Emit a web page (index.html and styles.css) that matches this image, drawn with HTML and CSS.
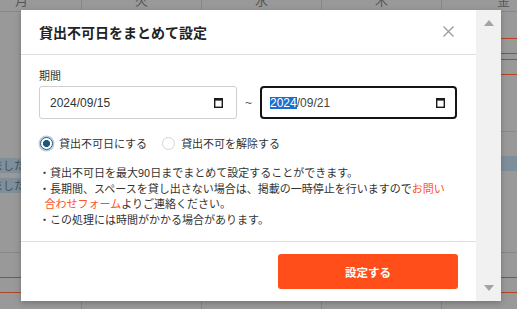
FILE: index.html
```html
<!DOCTYPE html>
<html lang="ja">
<head>
<meta charset="utf-8">
<link rel="stylesheet" href="styles.css">
</head>
<body>
<div class="calendar">
  <div class="cal-head">
    <div>月</div><div>火</div><div>水</div><div>木</div><div>金</div>
  </div>
  <div class="week week1">
    <div class="day"><div class="evt evt-a">しました</div><div class="evt evt-b">しました</div></div>
    <div class="day"></div>
    <div class="day"></div>
    <div class="day"></div>
    <div class="day"><div class="block block-a"></div><div class="block block-b"></div><div class="rule"></div><div class="evt evt-c"></div></div>
  </div>
  <div class="week week2">
    <div class="day"><div class="block block-c"></div></div>
    <div class="day"></div>
    <div class="day"></div>
    <div class="day"></div>
    <div class="day"><div class="block block-c"></div></div>
  </div>
</div>

<div class="modal">
  <div class="modal-main">
    <div class="modal-header">
      <h2 class="modal-title">貸出不可日をまとめて設定</h2>
      <span class="close"><svg width="11" height="11" viewBox="0 0 11 11"><path d="M0.5 0.5L10.5 10.5M10.5 0.5L0.5 10.5" stroke="#9d9d9d" stroke-width="1.4" fill="none"/></svg></span>
    </div>
    <div class="modal-body">
      <div class="field-label">期間</div>
      <div class="range">
        <div class="date-input">
          <span class="date-text">2024/09/15</span>
          <svg class="cal-icon" width="9" height="10" viewBox="0 0 9 10"><rect x="0.7" y="0.7" width="7.6" height="8.6" fill="none" stroke="#1a1a1a" stroke-width="1.4"/><rect x="0" y="0" width="9" height="2.6" fill="#1a1a1a"/></svg>
        </div>
        <span class="tilde">~</span>
        <div class="date-input focused">
          <span class="date-text"><span class="sel">2024</span>/09/21</span>
          <svg class="cal-icon" width="9" height="10" viewBox="0 0 9 10"><rect x="0.7" y="0.7" width="7.6" height="8.6" fill="none" stroke="#1a1a1a" stroke-width="1.4"/><rect x="0" y="0" width="9" height="2.6" fill="#1a1a1a"/></svg>
        </div>
      </div>
      <div class="radios">
        <label class="radio checked"><span class="radio-mark"></span>貸出不可日にする</label>
        <label class="radio"><span class="radio-mark"></span>貸出不可を解除する</label>
      </div>
      <ul class="notes">
        <li>・貸出不可日を最大90日までまとめて設定することができます。</li>
        <li>・長期間、スペースを貸し出さない場合は、掲載の一時停止を行いますので<span class="link">お問い合わせフォーム</span>よりご連絡ください。</li>
        <li>・この処理には時間がかかる場合があります。</li>
      </ul>
    </div>
    <div class="modal-footer">
      <button class="submit">設定する</button>
    </div>
  </div>
  <div class="scrollbar">
    <span class="arrow up"></span>
    <span class="arrow down"></span>
  </div>
</div>
</body>
</html>
```

FILE: styles.css
```css
* { box-sizing: border-box; }

html, body {
  margin: 0;
  padding: 0;
}

body {
  width: 517px;
  height: 309px;
  overflow: hidden;
  position: relative;
  background: #999999;
  font-family: "Noto Sans CJK JP", "Noto Sans", sans-serif;
  color: #333;
}

/* dimmed calendar behind the dialog */
.calendar {
  margin: -11px 0 0 -38px;
  width: 555px;
  overflow: hidden;
}

.cal-head,
.week {
  display: grid;
  grid-template-columns: 120px 120px 120px 120px 75px;
}

.cal-head {
  height: 23px;
  border-bottom: 1px solid #878787;
}

.cal-head div {
  border-right: 1px solid #878787;
  text-align: center;
  font-size: 13px;
  line-height: 22px;
  color: #555;
}

.cal-head div:last-child {
  border-right: none;
  text-align: left;
  padding-left: 55px;
}

.week {
  border-bottom: 1px solid #878787;
}

.week1 { height: 241px; }
.week2 { height: 60px; }

.day {
  border-right: 1px solid #878787;
  display: flex;
  flex-direction: column;
}

.day:last-child {
  border-right: none;
}

.evt {
  height: 15px;
  background: #7f8f99;
  font-size: 11px;
  line-height: 15px;
  color: #48535c;
  padding-left: 19px;
  white-space: nowrap;
  overflow: hidden;
}

.evt-a { margin-top: 146px; }
.evt-b { margin-top: 5px; }
.evt-c { margin-top: 24px; }

.block {
  height: 16px;
  border-top: 1px solid #ad4526;
  border-bottom: 1px solid #ad4526;
}

.block-a { margin-top: 26px; }
.block-b { margin-top: 5px; }
.block-c { margin-top: 24px; }

.rule {
  margin-top: 56px;
  border-top: 1px solid #8a8a8a;
}

/* dialog */
.modal {
  position: absolute;
  left: 21px;
  top: 10px;
  width: 480px;
  height: 291px;
  display: flex;
  background: #fff;
  box-shadow: 0 2px 6px rgba(0, 0, 0, 0.25);
}

.modal-main {
  width: 455px;
  display: flex;
  flex-direction: column;
}

.modal-header {
  height: 45px;
  display: flex;
  align-items: center;
  justify-content: space-between;
  padding: 0 22px 1px 18px;
  border-bottom: 1px solid #dedede;
}

.modal-title {
  margin: 0;
  font-size: 14px;
  font-weight: 700;
  color: #222;
  line-height: 20px;
}

.close {
  display: flex;
  width: 11px;
  height: 11px;
}

.modal-body {
  height: 186px;
  padding: 12px 19px 0 18px;
}

.field-label {
  font-size: 11px;
  line-height: 16px;
  color: #333;
  margin-bottom: 3px;
}

.range {
  display: flex;
  align-items: center;
}

.date-input {
  width: 198px;
  height: 33px;
  border: 1px solid #cfcfcf;
  border-radius: 3px;
  display: flex;
  align-items: center;
  justify-content: space-between;
  padding: 0 13px 0 10px;
  font-family: "Liberation Sans", Arial, sans-serif;
  font-size: 12px;
  color: #333;
}

.date-input.focused {
  width: 197px;
  border: 2px solid #141414;
  border-radius: 4px;
  padding: 0 10px 0 8px;
  color: #444;
}

.date-text {
  line-height: 14px;
}

.sel {
  background: #1b6fd1;
  color: #fff;
  display: inline-block;
  line-height: 12px;
}

.cal-icon {
  display: block;
}

.tilde {
  width: 23px;
  text-align: center;
  font-family: "Liberation Sans", Arial, sans-serif;
  font-size: 12px;
  color: #555;
}

.radios {
  display: flex;
  align-items: center;
  margin-top: 16px;
  height: 16px;
}

.radio {
  display: flex;
  align-items: center;
  font-size: 11px;
  line-height: 16px;
  color: #333;
  margin-right: 14px;
}

.radio-mark {
  width: 13px;
  height: 13px;
  border-radius: 50%;
  border: 1px solid #d4d4d4;
  background: #fff;
  margin: 0 6px 0 1px;
}

.radio.checked .radio-mark {
  border: 1.5px solid #21577a;
  background: radial-gradient(circle, #21577a 0 3.3px, #fff 3.8px);
  box-shadow: 0 0 0 1.5px rgba(120, 170, 210, 0.55);
}

.notes {
  list-style: none;
  margin: 14px 0 0;
  padding: 0 6px 0 0;
  font-size: 11px;
  line-height: 15.5px;
  color: #333;
}

.notes li {
  padding-left: 5.5px;
  text-indent: -5.5px;
}

.link {
  color: #ff5224;
}

.modal-footer {
  border-top: 1px solid #dedede;
  padding: 12px 18px 11px 0;
  display: flex;
  justify-content: flex-end;
}

.submit {
  width: 180px;
  height: 35px;
  border: none;
  border-radius: 3px;
  background: #ff4e1a;
  color: #fff;
  font-family: "Noto Sans CJK JP", sans-serif;
  font-size: 11.5px;
  font-weight: 700;
  padding: 0;
}

.scrollbar {
  width: 25px;
  background: #f1f1f1;
  display: flex;
  flex-direction: column;
  align-items: center;
  justify-content: space-between;
  padding: 10px 0 10px;
}

.arrow {
  width: 0;
  height: 0;
  border-left: 5.5px solid transparent;
  border-right: 5.5px solid transparent;
}

.arrow.up {
  border-bottom: 6px solid #a3a3a3;
}

.arrow.down {
  border-top: 6px solid #a3a3a3;
}
```
